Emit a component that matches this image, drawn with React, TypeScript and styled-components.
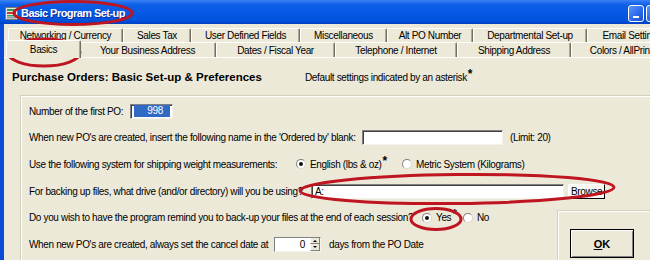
import styled, { createGlobalStyle } from "styled-components";

const GlobalStyle = createGlobalStyle`
  html, body {
    margin: 0;
    padding: 0;
    background: #ece9d8;
    overflow: hidden;
  }
  body {
    font-family: "Liberation Sans", Arial, sans-serif;
    font-size: 10px;
    letter-spacing: -0.35px;
    color: #000;
  }
`;

const Window = styled.div`
  position: relative;
  width: 684px;
  height: 260px;
  display: flex;
  flex-direction: column;
  overflow: hidden;
`;

const TitleBar = styled.div`
  flex: none;
  height: 24px;
  box-sizing: border-box;
  padding: 2px 4px 0 5px;
  display: flex;
  align-items: center;
  gap: 3px;
  background: linear-gradient(#3a82f6 0%, #0d5fe6 20%, #0458e4 55%, #0252dc 85%, #0040c4 100%);
`;

const Title = styled.span`
  flex: 1;
  color: #fff;
  font-size: 11px;
  font-weight: bold;
  letter-spacing: -0.55px;
  text-shadow: 1px 1px 0 #0a2a9a;
`;

const TitleButtons = styled.div`
  display: flex;
  gap: 2px;
`;

const CaptionButton = styled.div`
  width: 16px;
  height: 17px;
  box-sizing: border-box;
  border: 1px solid #fff;
  border-radius: 3px;
  background: linear-gradient(135deg, #5a96ff, #2a66e8 60%, #1b4fd0);
  position: relative;
  &::after {
    content: "";
    position: absolute;
    left: 4px;
    bottom: 3px;
    width: 6px;
    height: 2px;
    background: #fff;
  }
`;

const Frame = styled.div`
  flex: 1;
  display: flex;
  flex-direction: column;
  border-left: 4px solid #0a4ad6;
  border-right: 4px solid #0a4ad6;
  background: #ece9d8;
  min-height: 0;
`;

const TabStrip = styled.div`
  padding: 4px 0 0 4px;
  display: flex;
  flex-direction: column;
`;

const TabRow = styled.div`
  display: flex;
  align-items: flex-end;
`;

const Tab = styled.div<{ $w: number; $h: number; $active?: boolean }>`
  flex: none;
  width: ${(p) => p.$w + (p.$active ? 4 : 0)}px;
  height: ${(p) => p.$h + (p.$active ? 3 : 0)}px;
  margin: ${(p) => (p.$active ? "-2px -2px -1px -2px" : "0")};
  position: relative;
  z-index: ${(p) => (p.$active ? 1 : 0)};
  box-sizing: border-box;
  border-top: 1px solid #fff;
  border-left: 1px solid #fff;
  border-right: 1px solid #716f64;
  border-radius: 2px 2px 0 0;
  box-shadow: inset -1px 0 0 #aca899;
  background: #ece9d8;
  display: flex;
  align-items: center;
  justify-content: center;
  white-space: nowrap;
  overflow: hidden;
  font-size: 10px;
`;

const Panel = styled.div`
  flex: 1;
  display: flex;
  flex-direction: column;
  border-top: 1px solid #fff;
  min-height: 0;
`;

const Heading = styled.div`
  margin-top: 13px;
  padding-left: 8px;
  display: grid;
  grid-template-columns: 293px auto;
  align-items: baseline;
`;

const HeadingTitle = styled.span`
  font-size: 11.5px;
  font-weight: bold;
  letter-spacing: 0;
`;

const Note = styled.span`
  font-size: 10px;
`;

const Star = styled.span`
  font-size: 12px;
  font-weight: bold;
  vertical-align: 3px;
  line-height: 0;
  margin-left: 1px;
`;

const GroupBox = styled.div`
  flex: 1;
  margin: 12px 8px 0 16px;
  padding: 2px 0 0 8px;
  border: 1px solid #d0d0bf;
  border-bottom: none;
  box-shadow: inset 1px 1px 0 #fff;
  display: grid;
  grid-template-columns: 528px 1fr;
  grid-auto-rows: 26.6px;
`;

const Row = styled.div<{ $full?: boolean }>`
  grid-column: ${(p) => (p.$full ? "1 / -1" : "1")};
  display: flex;
  align-items: center;
  white-space: nowrap;
`;

const Label = styled.span<{ $w?: number }>`
  flex: none;
  width: ${(p) => (p.$w ? `${p.$w}px` : "auto")};
`;

const Limit = styled.span`
  margin-left: 7px;
`;

const Field = styled.div<{ $w: number }>`
  flex: none;
  width: ${(p) => p.$w}px;
  height: 15px;
  box-sizing: border-box;
  border-top: 1px solid #808080;
  border-left: 1px solid #808080;
  border-right: 1px solid #f4f3ee;
  border-bottom: 1px solid #f4f3ee;
  box-shadow: inset 1px 1px 0 #404040;
  background: #fff;
  display: flex;
  align-items: center;
  padding: 0 2px 0 3px;
`;

const Selected = styled.span`
  flex: 1;
  background: #316ac5;
  color: #fff;
  text-align: right;
  padding-right: 7px;
  line-height: 12px;
`;

const Radio = styled.span<{ $on?: boolean }>`
  flex: none;
  width: 10px;
  height: 10px;
  box-sizing: border-box;
  border-radius: 50%;
  border: 1px solid #808080;
  border-right-color: #d8d6cc;
  border-bottom-color: #d8d6cc;
  background: #fff;
  display: flex;
  align-items: center;
  justify-content: center;
  &::after {
    content: "";
    width: 4px;
    height: 4px;
    border-radius: 50%;
    background: ${(p) => (p.$on ? "#111" : "transparent")};
  }
`;

const Option = styled.span<{ $w?: number }>`
  flex: none;
  width: ${(p) => (p.$w ? `${p.$w}px` : "auto")};
  display: flex;
  align-items: center;
  gap: 4px;
`;

const Button = styled.div`
  flex: none;
  margin-left: 4px;
  height: 15px;
  box-sizing: border-box;
  padding: 0 2px;
  border-top: 1px solid #fff;
  border-left: 1px solid #fff;
  border-right: 1px solid #000;
  border-bottom: 1px solid #000;
  background: #f7f6f1;
  display: flex;
  align-items: center;
  u {
    text-decoration: underline;
  }
`;

const Spinner = styled.div`
  flex: none;
  display: flex;
  width: 47px;
  height: 15px;
  margin-right: 8px;
  box-sizing: border-box;
  border-top: 1px solid #808080;
  border-left: 1px solid #808080;
  border-right: 1px solid #f4f3ee;
  border-bottom: 1px solid #f4f3ee;
  background: #fff;
`;

const SpinValue = styled.span`
  flex: 1;
  text-align: right;
  padding-right: 5px;
  line-height: 13px;
`;

const SpinArrows = styled.div`
  width: 10px;
  display: flex;
  flex-direction: column;
`;

const SpinArrow = styled.div<{ $down?: boolean }>`
  flex: 1;
  background: #ece9d8;
  border-left: 1px solid #fff;
  border-right: 1px solid #808080;
  border-bottom: 1px solid #808080;
  display: flex;
  align-items: center;
  justify-content: center;
  &::after {
    content: "";
    border-left: 2px solid transparent;
    border-right: 2px solid transparent;
    ${(p) => (p.$down ? "border-top: 2px solid #000;" : "border-bottom: 2px solid #000;")}
  }
`;

const OkPanel = styled.div`
  grid-column: 2;
  grid-row: 5 / span 3;
  margin-top: 6px;
  border-top: 1px solid #d0d0bf;
  border-left: 1px solid #d0d0bf;
  box-shadow: inset 1px 1px 0 #fff;
  padding: 18px 0 0 12px;
`;

const OkButton = styled.div`
  width: 64px;
  height: 29px;
  box-sizing: border-box;
  border: 1px solid #000;
  box-shadow: inset 1px 1px 0 #fff, inset -1px -1px 0 #808080;
  background: #ece9d8;
  display: flex;
  align-items: center;
  justify-content: center;
  font-size: 11px;
  font-weight: bold;
  letter-spacing: 0;
  u {
    text-decoration: underline;
  }
`;

const Annotations = styled.svg`
  position: absolute;
  left: 0;
  top: 0;
  pointer-events: none;
`;

const topTabs = [
  { label: "Networking / Currency", w: 115 },
  { label: "Sales Tax", w: 68 },
  { label: "User Defined Fields", w: 109 },
  { label: "Miscellaneous", w: 87 },
  { label: "Alt PO Number", w: 86 },
  { label: "Departmental Set-up", w: 114 },
  { label: "Email Settings", w: 90 },
];

const bottomTabs = [
  { label: "Basics", w: 71, active: true },
  { label: "Your Business Address", w: 137 },
  { label: "Dates / Fiscal Year", w: 119 },
  { label: "Telephone / Internet", w: 122 },
  { label: "Shipping Address", w: 114 },
  { label: "Colors / AllPrint", w: 100 },
];

function AppIcon() {
  return (
    <svg width="13" height="13" viewBox="0 0 13 13">
      <rect x="0.5" y="0.5" width="12" height="12" fill="#e8e8e8" stroke="#7a7a7a" />
      <rect x="2" y="2" width="9" height="2" fill="#2f9e4f" />
      <rect x="2" y="5" width="9" height="2" fill="#c83a2a" />
      <rect x="2" y="8" width="9" height="1.5" fill="#3a9e6a" />
      <rect x="2" y="10" width="9" height="1.5" fill="#9a9a9a" />
    </svg>
  );
}

export default function App() {
  return (
    <>
      <GlobalStyle />
      <Window>
        <TitleBar>
          <AppIcon />
          <Title>Basic Program Set-up</Title>
          <TitleButtons>
            <CaptionButton />
            <CaptionButton />
            <CaptionButton />
          </TitleButtons>
        </TitleBar>
        <Frame>
          <TabStrip>
            <TabRow>
              {topTabs.map((t) => (
                <Tab key={t.label} $w={t.w} $h={14}>
                  {t.label}
                </Tab>
              ))}
            </TabRow>
            <TabRow>
              {bottomTabs.map((t) => (
                <Tab key={t.label} $w={t.w} $h={15} $active={t.active}>
                  {t.label}
                </Tab>
              ))}
            </TabRow>
          </TabStrip>
          <Panel>
            <Heading>
              <HeadingTitle>Purchase Orders: Basic Set-up &amp; Preferences</HeadingTitle>
              <Note>
                Default settings indicated by an asterisk<Star>*</Star>
              </Note>
            </Heading>
            <GroupBox>
              <Row $full>
                <Label $w={101}>Number of the first PO:</Label>
                <Field $w={43}>
                  <Selected>998</Selected>
                </Field>
              </Row>
              <Row $full>
                <Label $w={333}>
                  When new PO's are created, insert the following name in the 'Ordered by' blank:
                </Label>
                <Field $w={141} />
                <Limit>(Limit: 20)</Limit>
              </Row>
              <Row $full>
                <Label $w={267}>Use the following system for shipping weight measurements:</Label>
                <Option $w={106}>
                  <Radio $on />
                  <span>
                    English (lbs &amp; oz)<Star>*</Star>
                  </span>
                </Option>
                <Option>
                  <Radio />
                  <span>Metric System (Kilograms)</span>
                </Option>
              </Row>
              <Row $full>
                <Label $w={282}>For backing up files, what drive (and/or directory) will you be using?</Label>
                <Field $w={253}>A:</Field>
                <Button>
                  <u>B</u>rowse
                </Button>
              </Row>
              <Row>
                <Label $w={393}>
                  Do you wish to have the program remind you to back-up your files at the end of each session?
                </Label>
                <Option $w={41}>
                  <Radio $on />
                  <span>
                    Yes<Star>*</Star>
                  </span>
                </Option>
                <Option>
                  <Radio />
                  <span>No</span>
                </Option>
              </Row>
              <Row>
                <Label $w={245}>When new PO's are created, always set the cancel date at</Label>
                <Spinner>
                  <SpinValue>0</SpinValue>
                  <SpinArrows>
                    <SpinArrow />
                    <SpinArrow $down />
                  </SpinArrows>
                </Spinner>
                <span>days from the PO Date</span>
              </Row>
              <OkPanel>
                <OkButton>
                  <u>O</u>K
                </OkButton>
              </OkPanel>
            </GroupBox>
          </Panel>
        </Frame>
        <Annotations width="684" height="260" viewBox="0 0 684 260">
          <g fill="none" stroke="#bf1520" strokeWidth="3">
            <ellipse cx="73" cy="13" rx="59" ry="11.5" />
            <ellipse cx="44" cy="52.5" rx="36" ry="13.5" />
            <ellipse cx="457" cy="189" rx="157" ry="14.5" transform="rotate(-0.6 457 189)" />
            <ellipse cx="436" cy="219" rx="25" ry="10.5" />
          </g>
        </Annotations>
      </Window>
    </>
  );
}
